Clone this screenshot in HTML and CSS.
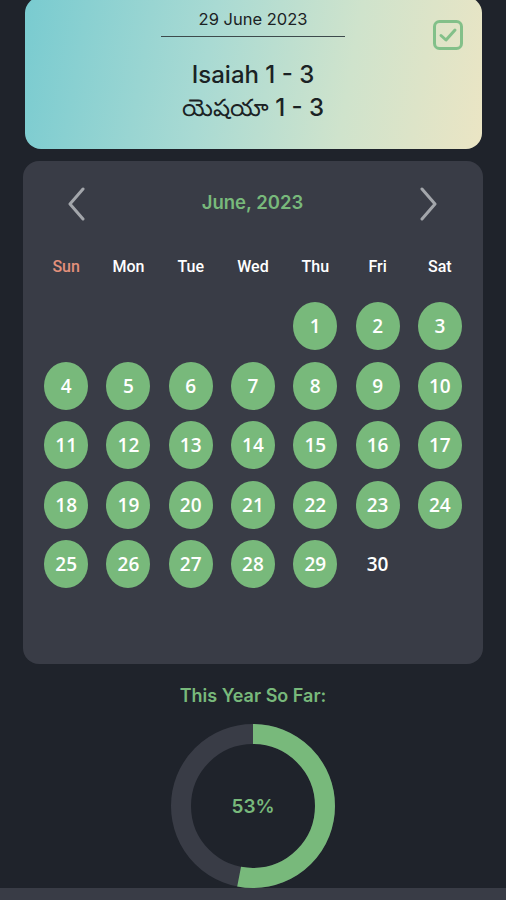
FILE: index.html
```html
<!DOCTYPE html>
<html lang="en">
<head>
  <meta charset="UTF-8" />
  <meta name="viewport" content="width=device-width, initial-scale=1" />
  <title>Reading Plan</title>
  <link rel="stylesheet" href="styles.css">
</head>
<body>
  <div class="screen">
    <section class="reading-card">
      <div class="reading-date">29 June 2023</div>
      <div class="reading-title">
        <div>Isaiah 1 - 3</div>
        <div>యెషయా 1 - 3</div>
      </div>
      <svg class="done-icon" viewBox="0 0 30 30" width="30" height="30">
        <rect x="1.5" y="1.5" width="27" height="27" rx="5" fill="none" stroke="#79bd83" stroke-width="3"/>
        <polyline points="8,15.5 13,20 22,10" fill="none" stroke="#79bd83" stroke-width="3" stroke-linecap="round" stroke-linejoin="round"/>
      </svg>
    </section>

    <section class="calendar">
      <div class="cal-header">
        <button class="nav-btn" aria-label="Previous month">
          <svg viewBox="0 0 18 34" width="18" height="34"><polyline points="16,2 3,17 16,32" fill="none" stroke="#a3a6ab" stroke-width="3" stroke-linecap="round" stroke-linejoin="round"/></svg>
        </button>
        <h2 class="cal-title">June, 2023</h2>
        <button class="nav-btn" aria-label="Next month">
          <svg viewBox="0 0 18 34" width="18" height="34"><polyline points="2,2 15,17 2,32" fill="none" stroke="#a3a6ab" stroke-width="3" stroke-linecap="round" stroke-linejoin="round"/></svg>
        </button>
      </div>
      <div class="cal-grid" id="cal-grid">
        <div class="weekday sunday">Sun</div>
        <div class="weekday">Mon</div>
        <div class="weekday">Tue</div>
        <div class="weekday">Wed</div>
        <div class="weekday">Thu</div>
        <div class="weekday">Fri</div>
        <div class="weekday">Sat</div>
      </div>
    </section>

    <section class="progress">
      <h3 class="progress-title">This Year So Far:</h3>
      <div class="donut">
        <svg viewBox="0 0 164 164" width="164" height="164">
          <circle cx="82" cy="82" r="72" fill="none" stroke="#393c46" stroke-width="20"/>
          <circle cx="82" cy="82" r="72" fill="none" stroke="#78b97b" stroke-width="20"
                  stroke-dasharray="239.8 452.4" transform="rotate(-90 82 82)"/>
        </svg>
        <span class="donut-label">53%</span>
      </div>
    </section>

    <div class="bottom-bar"></div>
  </div>

  <script>
    // June 2023 starts on a Thursday; days up to 29 are read
    const grid = document.getElementById('cal-grid');
    const firstDay = 4;
    const daysInMonth = 30;
    const readUpTo = 29;

    for (let i = 0; i < firstDay; i++) {
      grid.appendChild(document.createElement('div'));
    }
    for (let d = 1; d <= daysInMonth; d++) {
      const cell = document.createElement('div');
      cell.className = 'day';
      const num = document.createElement('span');
      num.textContent = d;
      if (d <= readUpTo) num.className = 'done';
      cell.appendChild(num);
      grid.appendChild(cell);
    }
  </script>
</body>
</html>
```

FILE: styles.css
```css
body {
  margin: 0;
  background: #1f232b;
  font-family: Inter, 'Noto Sans', sans-serif;
  color: #fff;
  overflow: hidden;
}
.screen {
  display: flex;
  flex-direction: column;
  align-items: center;
  height: 900px;
}
.screen > * {
  flex-shrink: 0;
}
/* Today's reading card */
.reading-card {
  position: relative;
  box-sizing: border-box;
  width: 457px;
  height: 152px;
  margin-top: -3px;
  padding-top: 12px;
  border-radius: 16px;
  background: linear-gradient(100deg, #79cbd0 0%, #a9dad3 40%, #cfe3cc 70%, #ebe5c4 100%);
  color: #1b2224;
  display: flex;
  flex-direction: column;
  align-items: center;
}
.reading-date {
  width: 184px;
  text-align: center;
  font-size: 16.5px;
  line-height: 20px;
  padding-bottom: 7px;
  border-bottom: 1px solid #3d4a4c;
}
.reading-title {
  margin-top: 21px;
  text-align: center;
  font-size: 24px;
  font-weight: 500;
  line-height: 33px;
}
.done-icon {
  position: absolute;
  top: 23px;
  right: 19px;
  opacity: 0.9;
}
/* Calendar */
.calendar {
  box-sizing: border-box;
  width: 460px;
  height: 503px;
  margin-top: 12px;
  padding: 20px 12px;
  border-radius: 16px;
  background: #393c46;
}
.cal-header {
  height: 46px;
  margin-bottom: 10px;
  display: flex;
  align-items: center;
  justify-content: space-between;
  padding: 0 33px 0 32px;
}
.nav-btn {
  background: none;
  border: none;
  padding: 0;
  display: flex;
  cursor: pointer;
}
.cal-title {
  margin: 0 0 4px;
  font-size: 18.5px;
  font-weight: 600;
  color: #78b97b;
}
.cal-grid {
  display: grid;
  grid-template-columns: repeat(7, 1fr);
  grid-auto-rows: 59.5px;
}
.weekday {
  display: flex;
  align-items: center;
  justify-content: center;
  font-family: Roboto, sans-serif;
  font-size: 16px;
  font-weight: 500;
}
.weekday.sunday {
  color: #e3907b;
}
.day {
  display: flex;
  align-items: center;
  justify-content: center;
  font-family: 'Open Sans', sans-serif;
  font-size: 19px;
  font-weight: 600;
}
.day span {
  width: 44px;
  height: 48px;
  display: flex;
  align-items: center;
  justify-content: center;
  border-radius: 50%;
}
.day span.done {
  background: #78b97b;
}
/* Year progress */
.progress {
  display: flex;
  flex-direction: column;
  align-items: center;
}
.progress-title {
  margin: 22px 0 18px;
  font-size: 18px;
  line-height: 20px;
  font-weight: 600;
  color: #78b97b;
}
.donut {
  position: relative;
  width: 164px;
  height: 164px;
}
.donut svg {
  display: block;
}
.donut-label {
  position: absolute;
  inset: 0;
  display: flex;
  align-items: center;
  justify-content: center;
  font-size: 19px;
  font-weight: 600;
  color: #78b97b;
}
.bottom-bar {
  align-self: stretch;
  height: 40px;
  background: #393c46;
}
```
